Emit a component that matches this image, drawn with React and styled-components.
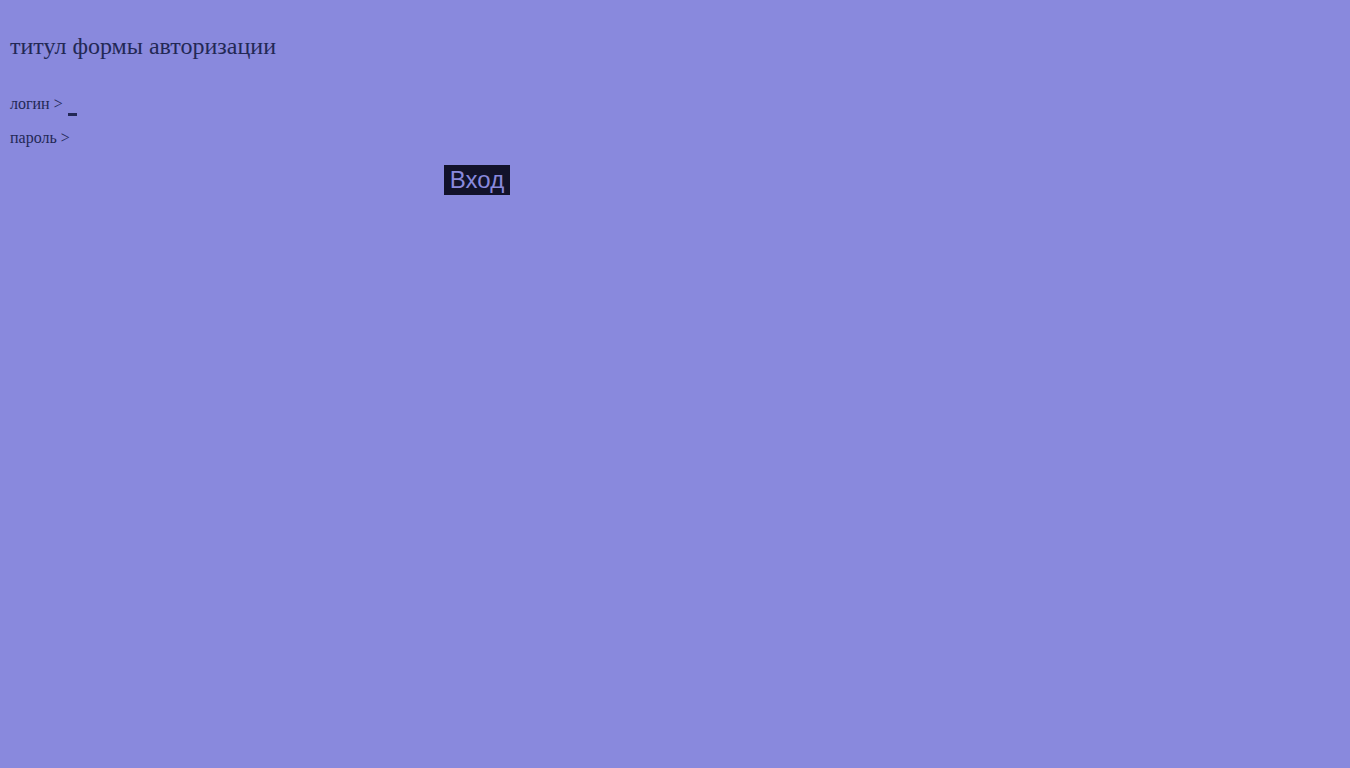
import styled, { createGlobalStyle } from "styled-components";

const GlobalStyle = createGlobalStyle`
  html, body {
    margin: 0;
    padding: 0;
    background: #8989dd;
    min-height: 100%;
  }
  body {
    font-family: "Liberation Serif", "Times New Roman", serif;
    color: #232855;
  }
`;

const Page = styled.div`
  min-height: 768px;
  padding: 0 10px;
  background: #8989dd;
`;

const Title = styled.h1`
  margin: 0;
  padding-top: 32px;
  font-size: 24px;
  font-weight: 400;
  line-height: 28px;
`;

const Form = styled.form`
  display: flex;
  flex-direction: column;
  width: 934px;
  margin-top: 27px;
`;

const Field = styled.label`
  display: flex;
  align-items: center;
  gap: 5px;
  height: 34px;
  font-size: 16px;
`;

const Cursor = styled.span`
  align-self: center;
  margin-top: 20px;
  width: 9px;
  height: 3px;
  background: ${({ $visible }) => ($visible ? "#232855" : "transparent")};
`;

const SubmitButton = styled.button`
  align-self: center;
  margin-top: 10px;
  border: none;
  padding: 0 6px;
  height: 30px;
  background: #12122a;
  color: #8989dd;
  font-family: "Liberation Sans", Arial, sans-serif;
  font-size: 24px;
  line-height: 30px;
  cursor: pointer;
`;

function App() {
  return (
    <>
      <GlobalStyle />
      <Page>
        <Title>титул формы авторизации</Title>
        <Form onSubmit={(e) => e.preventDefault()}>
          <Field>
            логин &gt;
            <Cursor $visible />
          </Field>
          <Field>
            пароль &gt;
            <Cursor />
          </Field>
          <SubmitButton type="submit">Вход</SubmitButton>
        </Form>
      </Page>
    </>
  );
}

export default App;
